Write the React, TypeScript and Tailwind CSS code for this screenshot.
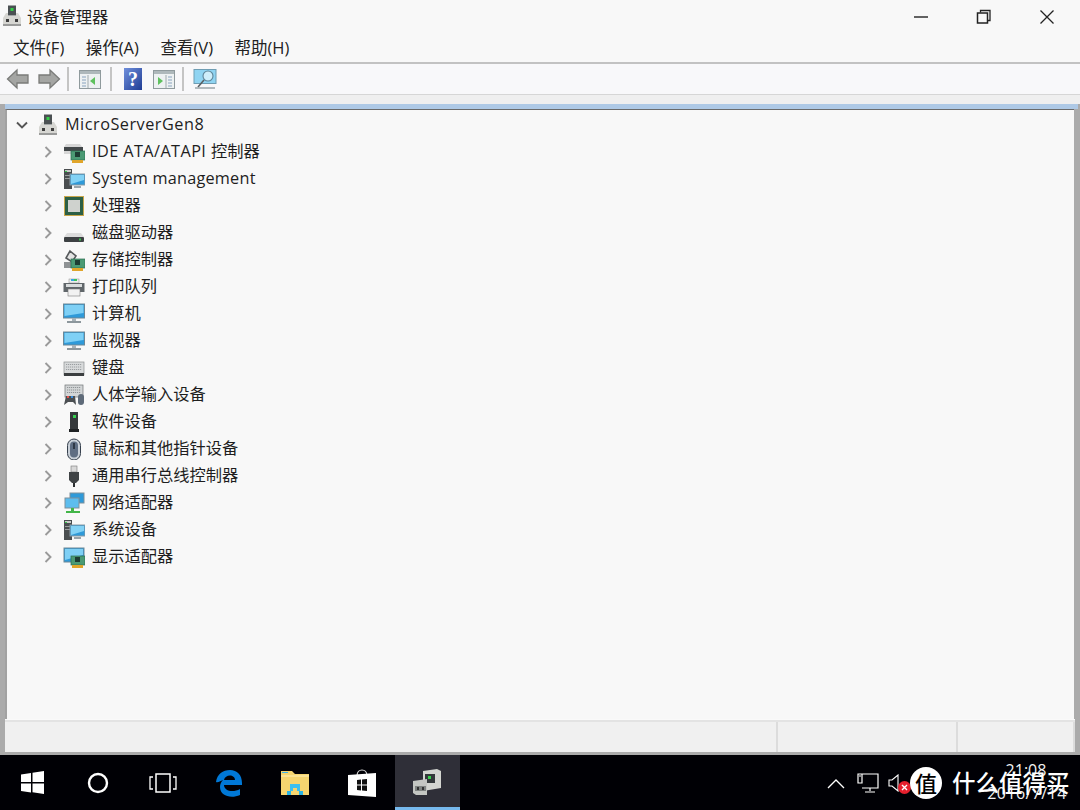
import React from "react";

const font = { fontFamily: '"Open Sans","Noto Sans CJK SC",sans-serif' };

function Server({ size = 22 }: { size?: number }) {
  return (
    <svg width={size} height={size} viewBox="0 0 22 22">
      <rect x="7" y="0.500" width="8" height="10" fill="#4a5052" />
      <rect x="9.500" y="3" width="3" height="3" fill="#35d04a" />
      <path d="M5 8h2v3h8V8h2l3 5v8H2v-8z" fill="#d6d6d2" />
      <rect x="2" y="19" width="18" height="2" fill="#9a9b9a" />
      <rect x="5" y="14" width="3" height="3" fill="#3d3d3d" />
      <rect x="14" y="14" width="3" height="3" fill="#3d3d3d" />
    </svg>
  );
}
function Board() {
  return (
    <g>
      <rect x="8" y="10" width="14" height="9" fill="#4b9a74" stroke="#2d6d50" strokeWidth=".7" />
      <rect x="12" y="11" width="5" height="5" fill="#1d3d33" />
      <path d="M9 19h11v3H9z" fill="#e0a52a" />
    </g>
  );
}
function Monitor({ x = 1, y = 1, w = 20, h = 14 }: { x?: number; y?: number; w?: number; h?: number }) {
  return (
    <g>
      <rect x={x} y={y} width={w} height={h} fill="#2f9ad9" stroke="#6c8796" strokeWidth="1" />
      <path d={`M${x + 1} ${y + 1}h${w - 2}v${h - 6}L${x + 1} ${y + h - 2}z`} fill="#7fd0f5" />
      <rect x={x + w / 2 - 2} y={y + h} width="4" height="3" fill="#a8b2b8" />
      <rect x={x + w / 2 - 7} y={y + h + 3} width="14" height="2" fill="#8d979c" />
    </g>
  );
}
function Tower() {
  return (
    <g>
      <rect x="1" y="1" width="8" height="20" fill="#4a4e50" />
      <rect x="2" y="2" width="6" height="2" fill="#c7c9c6" />
      <rect x="2" y="3" width="2" height="1" fill="#38c850" />
      <rect x="2" y="7" width="6" height="1" fill="#9a9d9d" />
      <rect x="2" y="10" width="6" height="1" fill="#9a9d9d" />
    </g>
  );
}
const icons: Record<string, React.ReactNode> = {
  ide: (
    <>
      <path d="M3 3h14l3 4v6H1V6z" fill="#d6d6d6" />
      <rect x="1" y="6" width="19" height="4" fill="#43484a" />
      <Board />
    </>
  ),
  sys: (
    <>
      <Tower />
      <rect x="7" y="6" width="15" height="11" fill="#2f9ad9" stroke="#8b9aa2" />
      <path d="M8 7h13v5L8 16z" fill="#83d2f5" />
      <rect x="11" y="18" width="7" height="2" fill="#9aa4a9" />
    </>
  ),
  cpu: (
    <>
      <rect x="1" y="1" width="20" height="20" fill="#c8a64a" />
      <rect x="2" y="2" width="18" height="18" fill="#2c5f45" />
      <rect x="5" y="5" width="12" height="12" fill="#cfd2ce" />
    </>
  ),
  disk: (
    <>
      <path d="M4 11h14l3 4H1z" fill="#dcdcdc" />
      <rect x="1" y="15" width="20" height="5" rx="1" fill="#3d4143" />
      <rect x="16" y="16.500" width="2" height="2" fill="#39c24f" />
    </>
  ),
  stor: (
    <>
      <path d="M7 2l6 5-4 6-6-4z" fill="#e3e3e3" stroke="#55595b" strokeWidth="1.600" />
      <rect x="1" y="13" width="12" height="6" fill="#8e9294" />
      <Board />
    </>
  ),
  print: (
    <>
      <rect x="6" y="3" width="10" height="4" fill="#ededed" stroke="#8a8a8a" strokeWidth=".5" />
      <rect x="8" y="3" width="3" height="2" fill="#35a6e0" />
      <rect x="11" y="3" width="3" height="2" fill="#3cc558" />
      <rect x="0.500" y="7" width="21" height="9" fill="#60666a" />
      <rect x="3" y="8" width="16" height="3" fill="#d9dcdd" />
      <rect x="5" y="13" width="12" height="7" fill="#f2f2f2" stroke="#7a7a7a" strokeWidth=".6" />
    </>
  ),
  pc: <Monitor x={0.500} y={1} w={21} h={14} />,
  mon: <Monitor x={0.500} y={2} w={21} h={13} />,
  kbd: (
    <>
      <rect x="1" y="5" width="20" height="13" fill="#d8dadb" stroke="#8d9192" strokeWidth=".7" />
      <path d="M3 7.500h16M3 10h16M3 12.500h16" stroke="#9a9ea0" strokeDasharray="1.200 .8" />
      <rect x="1" y="16" width="20" height="3" fill="#3b3e40" />
    </>
  ),
  hid: (
    <>
      <rect x="2" y="1" width="18" height="12" fill="#d2d5d6" stroke="#6f7476" strokeWidth=".7" />
      <path d="M4 3.500h14M4 6h14M4 8.500h14" stroke="#8f9496" strokeDasharray="1.200 .8" />
      <path d="M1 21l2-9h9l1 9-3-3H5z" fill="#4b4f52" />
      <rect x="15" y="10" width="6" height="11" rx="3" fill="#5e6a78" />
      <rect x="4" y="12" width="2" height="2" fill="#e6534e" />
      <rect x="8" y="12" width="2" height="2" fill="#3c8fe0" />
    </>
  ),
  soft: (
    <>
      <rect x="7" y="1" width="8" height="18" fill="#35393b" />
      <rect x="10" y="4" width="3" height="3" fill="#38d050" />
      <rect x="6" y="18" width="10" height="3" fill="#1f2224" />
    </>
  ),
  mouse: (
    <>
      <rect x="4.500" y="1" width="13" height="21" rx="6.500" fill="#c9d0d8" stroke="#36404d" />
      <rect x="7" y="3.500" width="8" height="16" rx="4" fill="#5f6e83" />
      <rect x="10" y="5" width="2" height="6" fill="#2e3846" />
    </>
  ),
  usb: (
    <>
      <rect x="8" y="1" width="6" height="6" fill="#d8d8d8" stroke="#777" strokeWidth=".6" />
      <path d="M6 7h10v8l-3 3h-4l-3-3z" fill="#3f4345" />
      <rect x="10" y="18" width="2" height="4" fill="#2b2e30" />
    </>
  ),
  net: (
    <>
      <rect x="7" y="1" width="14" height="10" fill="#2f9ad9" stroke="#7e909a" />
      <rect x="2" y="6" width="14" height="10" fill="#5dbdee" stroke="#7e909a" />
      <rect x="8" y="16" width="3" height="3" fill="#43b649" />
      <rect x="3" y="19" width="14" height="2" fill="#43b649" />
    </>
  ),
  disp: (
    <>
      <rect x="1" y="2" width="20" height="14" fill="#2f9ad9" stroke="#6c8796" />
      <path d="M2 3h18v6L2 14z" fill="#7fd0f5" />
      <Board />
    </>
  ),
};

const rows: [string, React.ReactNode][] = [
  ["ide", <><span className="tracking-[0.42px]">IDE ATA/ATAPI </span>控制器</>],
  ["sys", <span className="tracking-[0.22px]">System management</span>],
  ["cpu", "处理器"],
  ["disk", "磁盘驱动器"],
  ["stor", "存储控制器"],
  ["print", "打印队列"],
  ["pc", "计算机"],
  ["mon", "监视器"],
  ["kbd", "键盘"],
  ["hid", "人体学输入设备"],
  ["soft", "软件设备"],
  ["mouse", "鼠标和其他指针设备"],
  ["usb", "通用串行总线控制器"],
  ["net", "网络适配器"],
  ["sys", "系统设备"],
  ["disp", "显示适配器"],
];

function Chevron({ down }: { down?: boolean }) {
  return (
    <svg width="12" height="12" viewBox="0 0 12 12">
      <path d={down ? "M1 3.500l5 5 5-5" : "M3.500 1l5 5-5 5"} fill="none" stroke={down ? "#555" : "#9a9a9a"} strokeWidth="1.900" />
    </svg>
  );
}
function Sep() {
  return <div className="w-[2px] h-[24px] bg-[#c4c4c4]" />;
}
function Arrow({ flip }: { flip?: boolean }) {
  return (
    <svg width="24" height="22" viewBox="0 0 24 22" style={{ transform: flip ? "scaleX(-1)" : undefined }}>
      <path d="M1.500 11l9.500-9v5h11v8H11v5z" fill="#a4a5a3" stroke="#7a7b79" strokeWidth="1.300" />
    </svg>
  );
}
function Pane({ right }: { right?: boolean }) {
  return (
    <svg width="22" height="22" viewBox="0 0 22 22">
      <rect x="0.500" y="2.500" width="21" height="18" fill="#edf1f2" stroke="#8f9a9d" />
      <rect x="1" y="3" width="20" height="3" fill="#aeb8bb" />
      {right ? (
        <>
          <path d="M5 9l5 4-5 4z" fill="#5ec15e" />
          <path d="M15 9h4M15 12h4M15 15h4M15 18h4" stroke="#8aa3bd" strokeWidth="1.200" />
          <path d="M13 7v13" stroke="#a0aaad" />
        </>
      ) : (
        <>
          <path d="M16 9l-5 4 5 4z" fill="#5ec15e" />
          <path d="M3 9h4M3 12h4M3 15h4M3 18h4" stroke="#8aa3bd" strokeWidth="1.200" />
          <path d="M9 7v13" stroke="#a0aaad" />
        </>
      )}
    </svg>
  );
}

export default function App() {
  return (
    <div className="w-[1080px] h-[810px] overflow-hidden flex flex-col bg-[#f7f7f7] text-[#1a1a1a]" style={font}>
      {/* title */}
      <div className="h-[33px] flex items-center bg-[#f8f8f8] shrink-0">
        <div className="ml-[1px] w-[22px] -mt-[1px]"><Server size={22} /></div>
        <span className="ml-[4px] text-[16.250px] leading-[22px] text-[#222]">设备管理器</span>
        <div className="ml-auto flex items-center">
          <svg width="16" height="16" viewBox="0 0 16 16" className="mr-[47px]"><path d="M1 8h14" stroke="#222" strokeWidth="1.400" /></svg>
          <svg width="16" height="16" viewBox="0 0 16 16" className="mr-[47px]"><path d="M4.500 3.500V1.500h9.500v10h-2.500" fill="none" stroke="#222" strokeWidth="1.300" /><rect x="1.500" y="4" width="10" height="10" fill="none" stroke="#222" strokeWidth="1.500" /></svg>
          <svg width="16" height="16" viewBox="0 0 16 16" className="mr-[25px]"><path d="M1.500 1.500l13 13M14.500 1.500l-13 13" stroke="#222" strokeWidth="1.300" /></svg>
        </div>
      </div>
      {/* menu */}
      <div className="h-[29px] flex items-center bg-[#f8f8f8] text-[16.500px] leading-[22px] text-[#222] pl-[13px] gap-[21.500px] shrink-0">
        <span>文件(F)</span>
        <span>操作(A)</span>
        <span>查看(V)</span>
        <span>帮助(H)</span>
      </div>
      <div className="h-[2px] bg-[#c2c2c2] shrink-0" />
      {/* toolbar */}
      <div className="h-[30px] flex items-center bg-[#f8f8fa] pl-[6px] shrink-0">
        <Arrow />
        <div className="w-[7px]" />
        <Arrow flip />
        <div className="w-[6px]" />
        <Sep />
        <div className="w-[10px]" />
        <Pane />
        <div className="w-[9px]" />
        <Sep />
        <div className="w-[12px]" />
        <svg width="18" height="22" viewBox="0 0 18 22">
          <defs>
            <linearGradient id="help" x1="0" y1="0" x2="1" y2="1">
              <stop offset="0" stopColor="#6f8fdc" />
              <stop offset="1" stopColor="#1f3c94" />
            </linearGradient>
          </defs>
          <rect width="18" height="22" fill="url(#help)" />
          <text x="9" y="18" textAnchor="middle" fontSize="20" fontWeight="700" fill="#fff" style={{ fontFamily: '"Liberation Serif",serif' }}>?</text>
        </svg>
        <div className="w-[11px]" />
        <Pane right />
        <div className="w-[7px]" />
        <Sep />
        <div className="w-[9px]" />
        <svg width="24" height="22" viewBox="0 0 24 22">
          <rect x="1" y="1.500" width="22" height="14" fill="#8fd4f2" stroke="#6f9db3" />
          <circle cx="15" cy="8" r="5" fill="#cfeefa" stroke="#5f8599" strokeWidth="1.100" />
          <path d="M11 12L5 19" stroke="#5a5f62" strokeWidth="1.600" />
          <path d="M2 20h20" stroke="#9aa4a9" strokeWidth="1.500" />
        </svg>
      </div>
      <div className="h-[1px] bg-[#d6d6d6] shrink-0" />
      <div className="h-[9px] bg-[#efefef] shrink-0" />
      {/* body */}
      <div className="flex-1 min-h-0 flex flex-col bg-[#ababab] px-[5px]">
        <div className="h-[5px] bg-[#aec9e6] shrink-0 -mr-[3px]" />
        <div className="flex-1 min-h-0 flex flex-col border-t border-t-[#6a6a6a] border-l-2 border-l-[#a2a2a2] mr-[1px] bg-[#f8f8f8]">
          <div className="flex-1 min-h-0 text-[16.250px] text-[#1e1e1e] bg-[#f8f8f8] pt-[1px]">
            <div className="h-[27px] flex items-center">
              <div className="ml-[9px] w-[12px] flex"><Chevron down /></div>
              <div className="ml-[9px]"><Server /></div>
              <span className="ml-[6px] whitespace-nowrap tracking-[0.5px]">MicroServerGen8</span>
            </div>
            {rows.map(([ic, label], i) => (
              <div key={i} className="h-[27px] flex items-center">
                <div className="ml-[35px] w-[12px] flex"><Chevron /></div>
                <div className="ml-[9px] w-[22px] h-[22px]">
                  <svg width="22" height="22" viewBox="0 0 22 22">{icons[ic]}</svg>
                </div>
                <span className="ml-[7px] whitespace-nowrap">{label}</span>
              </div>
            ))}
          </div>
        </div>
        <div className="h-[3px] bg-[#e3e3e3] shrink-0 border-t border-[#fafafa]" />
        <div className="h-[30px] bg-[#f0f0f0] shrink-0 flex">
          <div className="w-[773px] border-r-2 border-[#dcdcdc]" />
          <div className="w-[180px] border-r-2 border-[#dcdcdc]" />
          <div className="flex-1 border-r-2 border-[#dcdcdc]" />
        </div>
        <div className="h-[3px] shrink-0" />
      </div>
      {/* taskbar */}
      <div className="relative h-[55px] bg-[#000005] flex items-center text-white shrink-0">
        <div className="w-[65px] flex justify-center">
          <svg width="23" height="23" viewBox="0 0 23 23"><path d="M0 3.500l10-1.500v9H0zM11.500 1.800L23 0v11H11.500zM0 12.500h10v9L0 20zM11.500 12.500H23V23l-11.500-1.700z" fill="#fff" /></svg>
        </div>
        <div className="w-[65px] flex justify-center">
          <svg width="22" height="22" viewBox="0 0 22 22"><circle cx="11" cy="11" r="9" fill="none" stroke="#fff" strokeWidth="2.400" /></svg>
        </div>
        <div className="w-[65px] flex justify-center">
          <svg width="28" height="20" viewBox="0 0 28 20"><rect x="7" y="1" width="14" height="18" fill="none" stroke="#fff" strokeWidth="1.500" /><path d="M4 4H1v12h3M24 4h3v12h-3" fill="none" stroke="#fff" strokeWidth="1.300" /></svg>
        </div>
        <div className="w-[67px] flex justify-center">
          <svg width="28" height="28" viewBox="0 0 28 28"><path d="M1 13C2 5 8 1 15 1c7 0 12 5 12 13v2H9c0 6 9 8 16 4v6c-9 4-20 1-20-8 0-3 1-5 3-7-3 1-5 3-7 2zM9 11h11c0-6-10-6-11 0z" fill="#0078d7" /></svg>
        </div>
        <div className="w-[66px] flex justify-center">
          <svg width="30" height="26" viewBox="0 0 30 26"><path d="M1 1h11l3 3h14v21H1z" fill="#f6d56f" /><rect x="2" y="2" width="6" height="1" fill="#3fb5e8" /><path d="M1 6h28" stroke="#fff1b8" /><path d="M10 21v-7h10v7h-3v-3h-4v3z" fill="#3cc0ee" /><path d="M7 25v-4h4v4zM19 25v-4h4v4z" fill="#29b3e6" /></svg>
        </div>
        <div className="w-[67px] flex justify-center">
          <svg width="30" height="32" viewBox="0 0 30 32"><path d="M10 9C10 1 20 1 20 9" fill="none" stroke="#ddd" strokeWidth="1.200" /><path d="M1 8l28-2v24l-28-2z" fill="#fff" /><path d="M10 13l4-.5v5h-4zM15 12.500l5-.5v5.500h-5zM10 18.500h4v5l-4-.5zM15 18.500h5v5.500l-5-.5z" fill="#111" /></svg>
        </div>
        <div className="w-[65px] h-full flex flex-col bg-[#2f2f38]">
          <div className="flex-1 flex items-center justify-center pt-[3px]">
            <svg width="32" height="30" viewBox="0 0 32 30"><path d="M11 3l14-2 4 2v17l-18 3z" fill="#d3d5d0" /><rect x="13" y="6" width="10" height="9" fill="#33383a" /><rect x="16" y="8" width="3" height="3" fill="#35d04a" /><path d="M1 13l14-2v16H4l-3-2z" fill="#c4c6c2" /><rect x="3" y="18" width="11" height="5" fill="#7e8280" /><rect x="5" y="19" width="2" height="3" fill="#333" /><rect x="10" y="19" width="2" height="3" fill="#333" /></svg>
          </div>
          <div className="h-[3px] bg-[#76b9ed]" />
        </div>
        {/* tray */}
        <div className="ml-auto flex items-center">
          <svg width="20" height="12" viewBox="0 0 20 12" className="mr-[11px]"><path d="M2 11l8-8 8 8" fill="none" stroke="#fff" strokeWidth="1.300" /></svg>
          <svg width="22" height="22" viewBox="0 0 22 22" className="mr-[9px]"><path d="M5 2h16v14H5M1 2h4v9H1zM2 4h2M13 16v3M8 20h10" fill="none" stroke="#fff" strokeWidth="1.200" /></svg>
          <svg width="12" height="18" viewBox="0 0 12 18" className="mr-[10px]"><path d="M1 6h3l6-5v16l-6-5H1z" fill="none" stroke="#fff" strokeWidth="1.100" /></svg>
          <div className="w-[170px] h-[20px]" />
        </div>
        <div className="absolute left-[898px] top-[26px] w-[13px] h-[13px] rounded-full bg-[#e5202e] flex items-center justify-center">
          <svg width="7" height="7" viewBox="0 0 7 7"><path d="M1 1l5 5M6 1L1 6" stroke="#fff" strokeWidth="1.400" /></svg>
        </div>
        <div className="absolute left-[985px] top-[5px] w-[84px] text-center text-[16px] leading-[20px] whitespace-nowrap text-[#f2f2f2]">
          <div className="pr-[2px]">21:08</div>
          <div className="mt-[3px] tracking-[0.4px]">2016/7/14</div>
        </div>
        <div className="absolute left-[910px] top-[12px] w-[32px] h-[32px] rounded-full bg-white flex items-center justify-center text-black text-[22px] leading-none font-medium">值</div>
        <div className="absolute left-[952px] top-[14px] text-[23.500px] leading-[28px] font-medium whitespace-nowrap text-white">什么值得买</div>
      </div>
    </div>
  );
}
